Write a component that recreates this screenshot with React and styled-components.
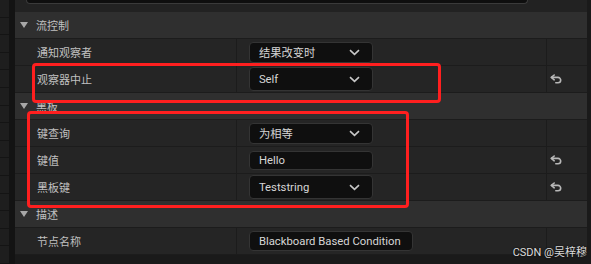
import React from 'react';
import styled, { createGlobalStyle } from 'styled-components';

const GlobalStyle = createGlobalStyle`
  body {
    margin: 0;
    background: #1a1a1a;
    font-family: 'Roboto', 'Noto Sans CJK SC', sans-serif;
  }
`;

const Screen = styled.div`
  position: relative;
  width: 591px;
  height: 264px;
  overflow: hidden;
  display: flex;
  background: #1a1a1a;
`;

const SideList = styled.div`
  width: 9px;
  background: #1e1e1e;
  display: flex;
  flex-direction: column;
`;

const SideItem = styled.div`
  height: 17px;
  border-bottom: 1px solid #141414;
`;

const Gutter = styled.div`
  width: 6px;
  background: #131313;
`;

const Panel = styled.div`
  width: 572px;
  display: flex;
  flex-direction: column;
`;

const TopBar = styled.div`
  height: 12px;
  background: #222;
  padding-left: 11px;
`;

const SearchEdge = styled.div`
  width: 500px;
  height: 3px;
  background: #0e0e0e;
  border: 1px solid #3a3a3a;
  border-top: none;
  border-radius: 0 0 5px 5px;
`;

const SectionHeader = styled.div`
  height: 26px;
  display: flex;
  align-items: center;
  gap: 8px;
  padding-left: 5px;
  background: #2f2f2f;
  border-bottom: 1px solid #1c1c1c;
  color: #c0c0c0;
  font-size: 11px;
`;

const Caret = styled.span`
  width: 0;
  height: 0;
  border-left: 4.5px solid transparent;
  border-right: 4.5px solid transparent;
  border-top: 6px solid #a8a8a8;
`;

const Row = styled.div`
  height: 26px;
  display: flex;
  background: #252525;
  border-bottom: 1px solid #1c1c1c;
`;

const LabelCell = styled.div`
  width: 200px;
  padding-left: 22px;
  display: flex;
  align-items: center;
  border-right: 1px solid #1c1c1c;
  color: #c0c0c0;
  font-size: 11px;
`;

const ValueCell = styled.div`
  width: 299px;
  padding-left: 12px;
  display: flex;
  align-items: center;
  border-right: 1px solid #1c1c1c;
`;

const ResetCell = styled.div`
  width: 37px;
  display: flex;
  align-items: center;
  padding-left: 3px;
`;

const Field = styled.div`
  box-sizing: border-box;
  width: ${p => p.$width}px;
  height: ${p => p.$height}px;
  padding: 0 12px 0 9px;
  display: flex;
  align-items: center;
  justify-content: space-between;
  background: #0f0f0f;
  border: 1px solid #343434;
  border-radius: 4px;
  color: #d6d6d6;
  font-size: 11.3px;
  white-space: nowrap;
`;

const Chevron = () => (
  <svg width="11" height="7" viewBox="0 0 11 7">
    <path d="M1 1.2 5.5 5.4 10 1.2" fill="none" stroke="#c8c8c8" strokeWidth="1.6" />
  </svg>
);

const ResetArrow = () => (
  <svg width="13" height="10" viewBox="0 0 13 10">
    <g fill="none" stroke="#b8b8b8" strokeWidth="1.6" strokeLinecap="round" strokeLinejoin="round">
      <path d="M4.2 1 1.3 3.4 4.2 5.8" />
      <path d="M1.6 3.4h6.4a2.7 2.7 0 0 1 0 5.4H5.8" />
    </g>
  </svg>
);

const Marker = styled.div`
  position: absolute;
  left: ${p => p.$x}px;
  top: ${p => p.$y}px;
  width: ${p => p.$w}px;
  height: ${p => p.$h}px;
  box-sizing: border-box;
  border: 3px solid #ff1f1f;
  border-radius: 4px;
  pointer-events: none;
`;

const Watermark = styled.div`
  position: absolute;
  right: 4px;
  bottom: 5px;
  color: #dcdcdc;
  font-size: 11px;
  text-shadow: 0 0 2px #000;
`;

const sections = [
  {
    title: '流控制',
    rows: [
      { label: '通知观察者', value: '结果改变时', dropdown: true, w: 124, h: 21 },
      { label: '观察器中止', value: 'Self', dropdown: true, w: 124, h: 24, reset: true },
    ],
  },
  {
    title: '黑板',
    rows: [
      { label: '键查询', value: '为相等', dropdown: true, w: 124, h: 21 },
      { label: '键值', value: 'Hello', w: 124, h: 19, reset: true },
      { label: '黑板键', value: 'Teststring', dropdown: true, w: 124, h: 24, reset: true },
    ],
  },
  {
    title: '描述',
    rows: [{ label: '节点名称', value: 'Blackboard Based Condition', w: 164, h: 20 }],
  },
];

export default function App() {
  return (
    <Screen>
      <GlobalStyle />
      <SideList>
        {Array.from({ length: 15 }).map((_, i) => (
          <SideItem key={i} />
        ))}
      </SideList>
      <Gutter />
      <Panel>
        <TopBar>
          <SearchEdge />
        </TopBar>
        {sections.map(section => (
          <React.Fragment key={section.title}>
            <SectionHeader>
              <Caret />
              {section.title}
            </SectionHeader>
            {section.rows.map(row => (
              <Row key={row.label}>
                <LabelCell>{row.label}</LabelCell>
                <ValueCell>
                  <Field $width={row.w} $height={row.h}>
                    <span>{row.value}</span>
                    {row.dropdown && <Chevron />}
                  </Field>
                </ValueCell>
                <ResetCell>{row.reset && <ResetArrow />}</ResetCell>
              </Row>
            ))}
          </React.Fragment>
        ))}
      </Panel>
      <Marker $x={32} $y={63} $w={409} $h={40} />
      <Marker $x={27} $y={111} $w={382} $h={97} />
      <Watermark>CSDN @吴梓穆</Watermark>
    </Screen>
  );
}
